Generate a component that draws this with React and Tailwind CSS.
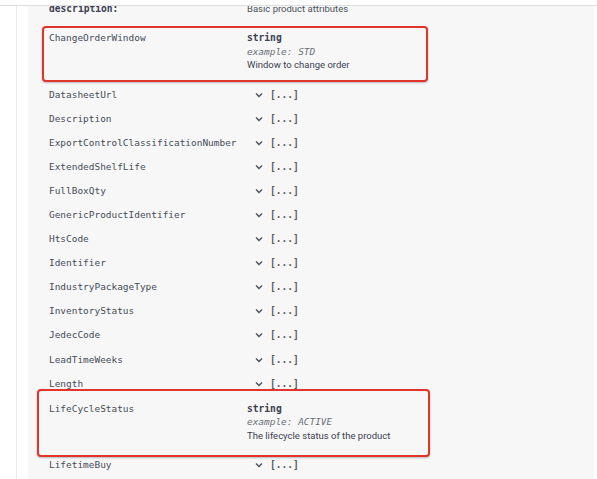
const mono = { fontFamily: '"DejaVu Sans Mono", "Liberation Mono", monospace' }

const rows = [
  'DatasheetUrl',
  'Description',
  'ExportControlClassificationNumber',
  'ExtendedShelfLife',
  'FullBoxQty',
  'GenericProductIdentifier',
  'HtsCode',
  'Identifier',
  'IndustryPackageType',
  'InventoryStatus',
  'JedecCode',
  'LeadTimeWeeks',
  'Length',
]

const Chevron = () => (
  <svg className="w-[8px] h-[8px] text-[#4a4f5c]" viewBox="0 0 8 8" fill="none" stroke="currentColor" strokeWidth="1.4">
    <path d="M1 2.5 L4 5.5 L7 2.5" />
  </svg>
)

const CollapsedRow = ({ name }) => (
  <div className="flex items-center h-[24.1px] pl-[21px]">
    <div className="w-[198px] text-[9.45px] leading-[14px] text-[#454b58]" style={mono}>{name}</div>
    <div className="flex items-center ml-[8px]">
      <Chevron />
      <span className="ml-[7px] text-[9.6px] leading-[14px] font-bold text-[#555a66]" style={mono}>[...]</span>
    </div>
  </div>
)

const ExpandedRow = ({ name, example, description, pt, pb, box }) => (
  <div className={`relative flex items-start pl-[21px] ${pt} ${pb}`}>
    <div className={`absolute rounded-[4px] border-2 border-[#e2342b] bg-[#f7f7f7] shadow-[0_1px_2px_rgba(0,0,0,0.25)] ${box}`} />
    <div className="relative w-[198px] text-[9.45px] leading-[13.5px] text-[#454b58]" style={mono}>{name}</div>
    <div className="relative flex flex-col">
      <span className="text-[9.6px] leading-[13.5px] font-bold text-[#3b4151]" style={mono}>string</span>
      <span className="text-[9.45px] leading-[13.5px] italic text-[#6b6f78]" style={mono}>example: {example}</span>
      <span className="text-[9.5px] leading-[13.5px] text-[#3b4151] font-['Roboto',sans-serif]">{description}</span>
    </div>
  </div>
)

export default function App() {
  return (
    <div className="w-[597px] h-[479px] bg-white overflow-hidden flex flex-col">
      <div className="h-[5px] shrink-0" />
      <div className="h-px bg-[#dcdcdc] shrink-0" />
      <div className="flex flex-1 min-h-0">
        <div className="w-[16px] shrink-0" />
        <div className="w-px bg-[#ebebeb] shrink-0" />
        <div className="w-[11px] shrink-0" />
        <div className="w-[566px] bg-[#f7f7f7] overflow-hidden">
          <div className="flex items-center h-[24px] -mt-[9px] pl-[21px]">
            <div className="w-[198px] text-[9.6px] leading-[14px] font-bold text-[#3b4151]" style={mono}>description:</div>
            <div className="text-[9.5px] leading-[14px] text-[#4a4f5a] font-['Roboto',sans-serif]">Basic product attributes</div>
          </div>
          <ExpandedRow
            name="ChangeOrderWindow"
            example="STD"
            description="Window to change order"
            pt="pt-[10px]"
            pb="pb-[11px]"
            box="left-[14px] w-[386px] top-[5px] bottom-[1px]"
          />
          {rows.map((r) => (
            <CollapsedRow key={r} name={r} />
          ))}
          <ExpandedRow
            name="LifeCycleStatus"
            example="ACTIVE"
            description="The lifecycle status of the product"
            pt="pt-[6px]"
            pb="pb-[11px]"
            box="left-[9px] w-[393px] -top-[7px] -bottom-[4px]"
          />
          <CollapsedRow name="LifetimeBuy" />
        </div>
      </div>
    </div>
  )
}
